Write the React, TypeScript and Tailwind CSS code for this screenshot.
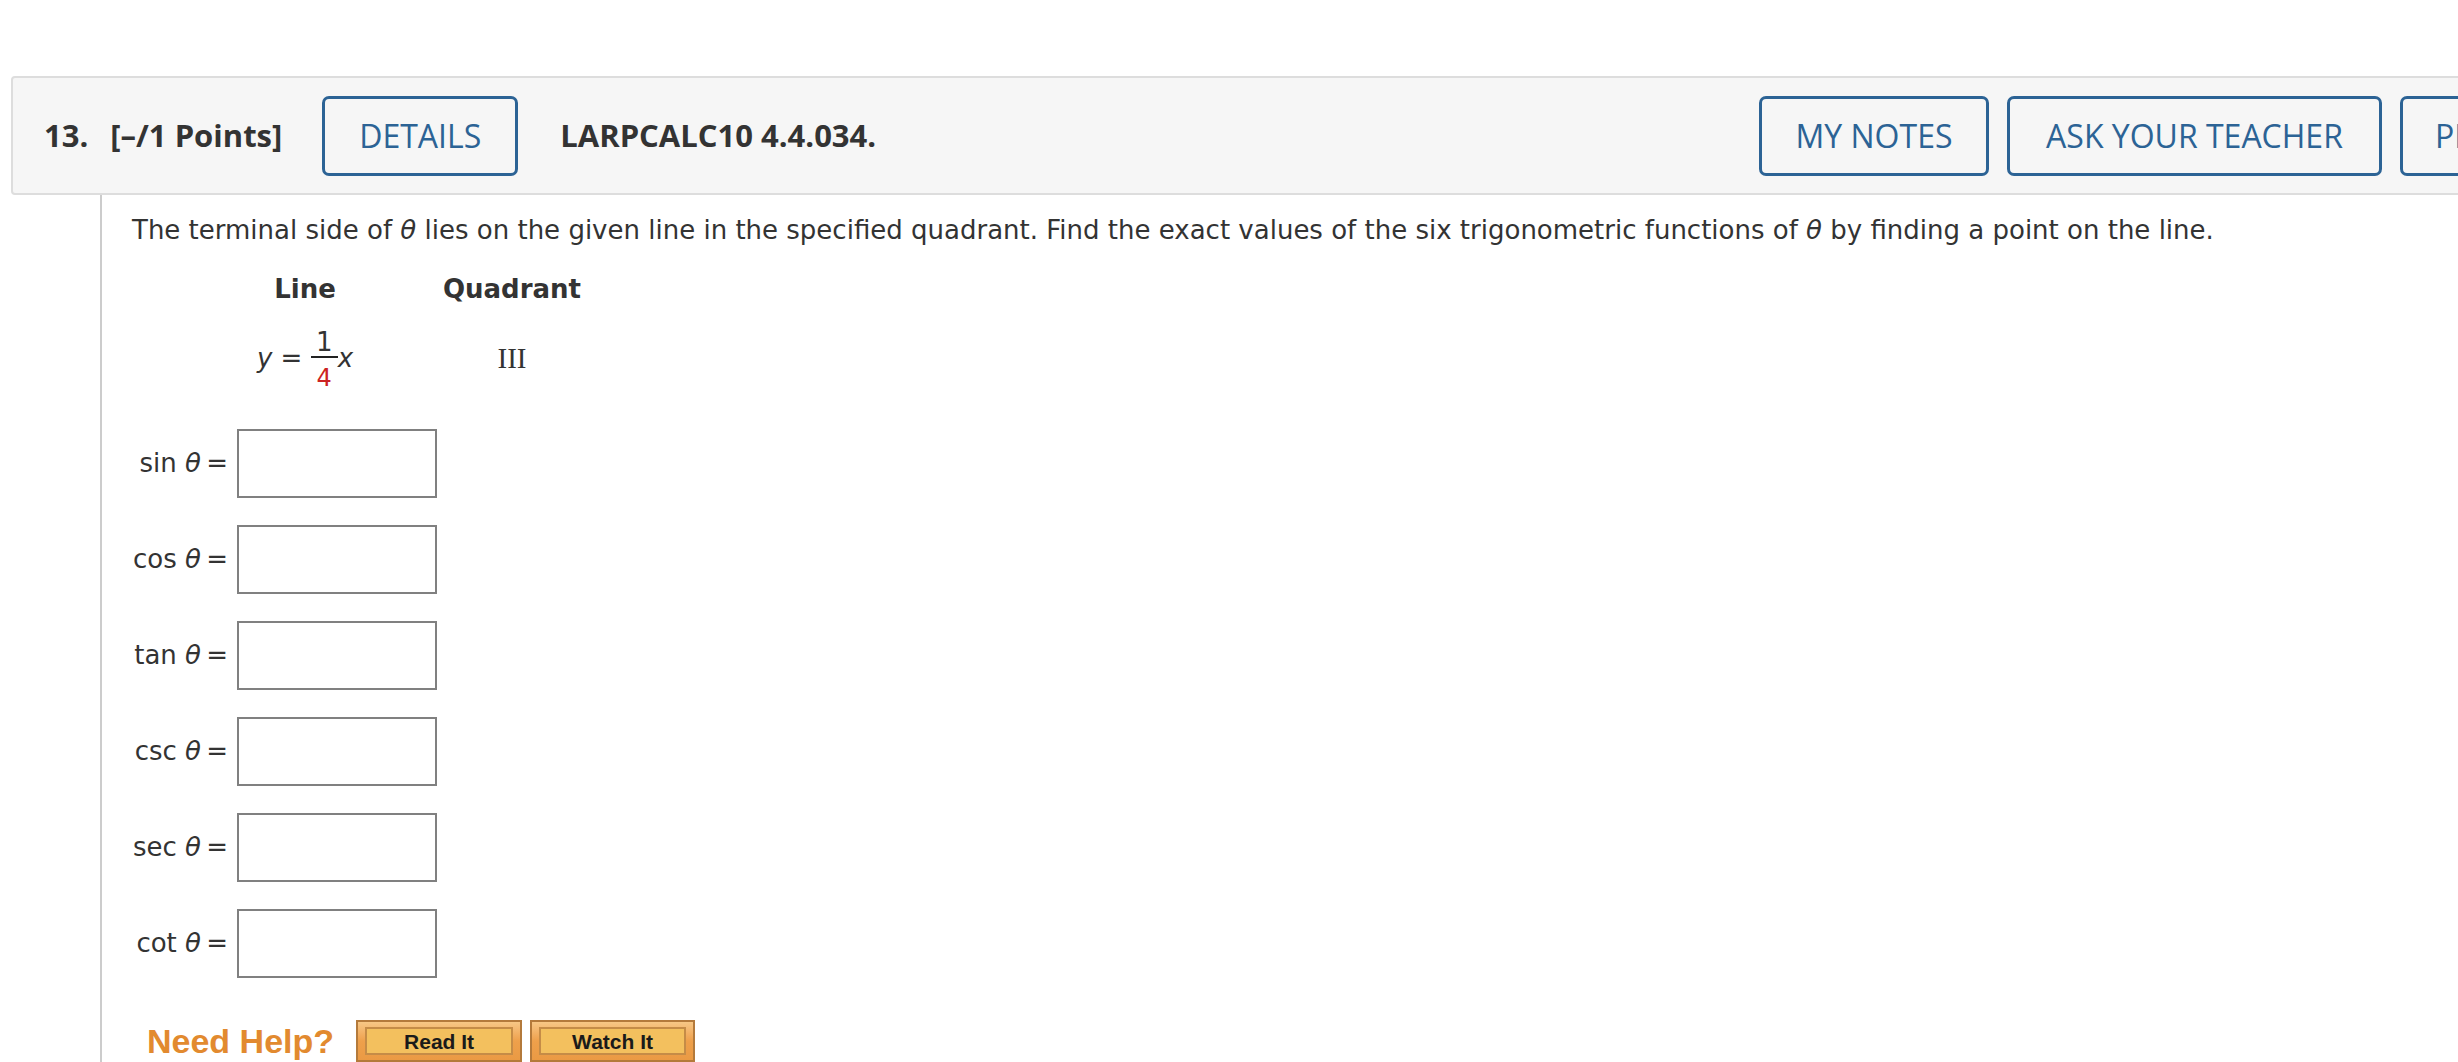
import React from 'react';

const trigRows = ['sin', 'cos', 'tan', 'csc', 'sec', 'cot'];

const HeaderButton: React.FC<{ label: string; width: string }> = ({ label, width }) => (
  <button
    className={`flex h-[80px] shrink-0 items-center justify-center rounded-[7px] border-[3px] border-[#2c6395] bg-[#f6f6f6] text-[32px] leading-none text-[#2c6395] ${width}`}
  >
    {label}
  </button>
);

const HelpButton: React.FC<{ label: string; width: string }> = ({ label, width }) => (
  <div
    className={`flex h-[42px] shrink-0 border-2 border-[#b47a3b] bg-linear-to-b from-[#f7c785] via-[#eea04b] to-[#ea9a44] px-[7px] py-[5px] ${width}`}
  >
    <div className="flex flex-1 items-center justify-center border-2 border-[#c58c47] bg-[#f3c05e] font-['Liberation_Sans',Arial,sans-serif] text-[21px] font-bold leading-none text-[#1a1a1a]">
      {label}
    </div>
  </div>
);

export default function App() {
  return (
    <div className="relative h-[1062px] w-[2458px] overflow-hidden bg-white pt-[76px] font-['DejaVu_Sans',Verdana,sans-serif] text-[#333333]">
      {/* question header */}
      <div className="ml-[11px] flex h-[119px] w-[2800px] items-center rounded-[4px] border-2 border-[#dddddd] bg-[#f6f6f6] font-['Open_Sans',sans-serif] text-[#333333]">
        <div className="flex w-[1746px] shrink-0 items-center pl-[31px]">
          <span className="text-[31px] font-bold leading-none">13.</span>
          <span className="ml-[22px] text-[31px] font-bold leading-none">[–/1 Points]</span>
          <div className="ml-[40px]">
            <HeaderButton label="DETAILS" width="w-[196px]" />
          </div>
          <span className="ml-[42px] text-[31px] font-bold leading-none">LARPCALC10 4.4.034.</span>
        </div>
        <div className="flex items-center gap-[18px]">
          <HeaderButton label="MY NOTES" width="w-[230px]" />
          <HeaderButton label="ASK YOUR TEACHER" width="w-[375px]" />
          <HeaderButton label="PRACTICE ANOTHER" width="w-[370px]" />
        </div>
      </div>

      {/* question body */}
      <div className="ml-[100px] min-h-[900px] border-l-2 border-[#cccccc] pl-[30px] pt-[16px] text-[26px]">
        <p className="leading-[39px]">
          The terminal side of <i>θ</i> lies on the given line in the specified quadrant. Find the exact values of the six
          trigonometric functions of <i>θ</i> by finding a point on the line.
        </p>

        <div className="ml-[69px] mt-[20px]">
          <div className="flex font-bold leading-[39px]">
            <div className="w-[208px] text-center">Line</div>
            <div className="w-[206px] text-center">Quadrant</div>
          </div>
          <div className="mt-[19px] flex items-center">
            <div className="flex w-[208px] items-center justify-center">
              <i>y</i>
              <span className="whitespace-pre"> = </span>
              <span className="inline-flex flex-col items-center">
                <span className="h-[28px] px-[5px] text-[26px] leading-[28px]">1</span>
                <span className="h-[2px] w-[27px] bg-[#222222]" />
                <span className="mt-[9px] h-[22px] text-[24px] leading-[22px] text-[#cc2222]">4</span>
              </span>
              <i>x</i>
            </div>
            <div className="w-[206px] text-center font-['Liberation_Serif',serif] text-[29px]">III</div>
          </div>
        </div>

        <div className="mt-[40px] flex flex-col gap-[27px]">
          {trigRows.map((fn) => (
            <div key={fn} className="flex items-center">
              <div className="w-[96px] whitespace-nowrap text-right leading-[39px]">
                {fn} <i>θ</i>&#8201;=
              </div>
              <div className="ml-[9px] h-[69px] w-[200px] border-2 border-[#808080] bg-white" />
            </div>
          ))}
        </div>

        <div className="mt-[42px] flex items-center">
          <span className="ml-[15px] font-['Liberation_Sans',Arial,sans-serif] text-[34px] font-bold leading-[34px] text-[#e28a2f]">
            Need Help?
          </span>
          <div className="ml-[22px]">
            <HelpButton label="Read It" width="w-[166px]" />
          </div>
          <div className="ml-[8px]">
            <HelpButton label="Watch It" width="w-[165px]" />
          </div>
        </div>
      </div>
    </div>
  );
}
